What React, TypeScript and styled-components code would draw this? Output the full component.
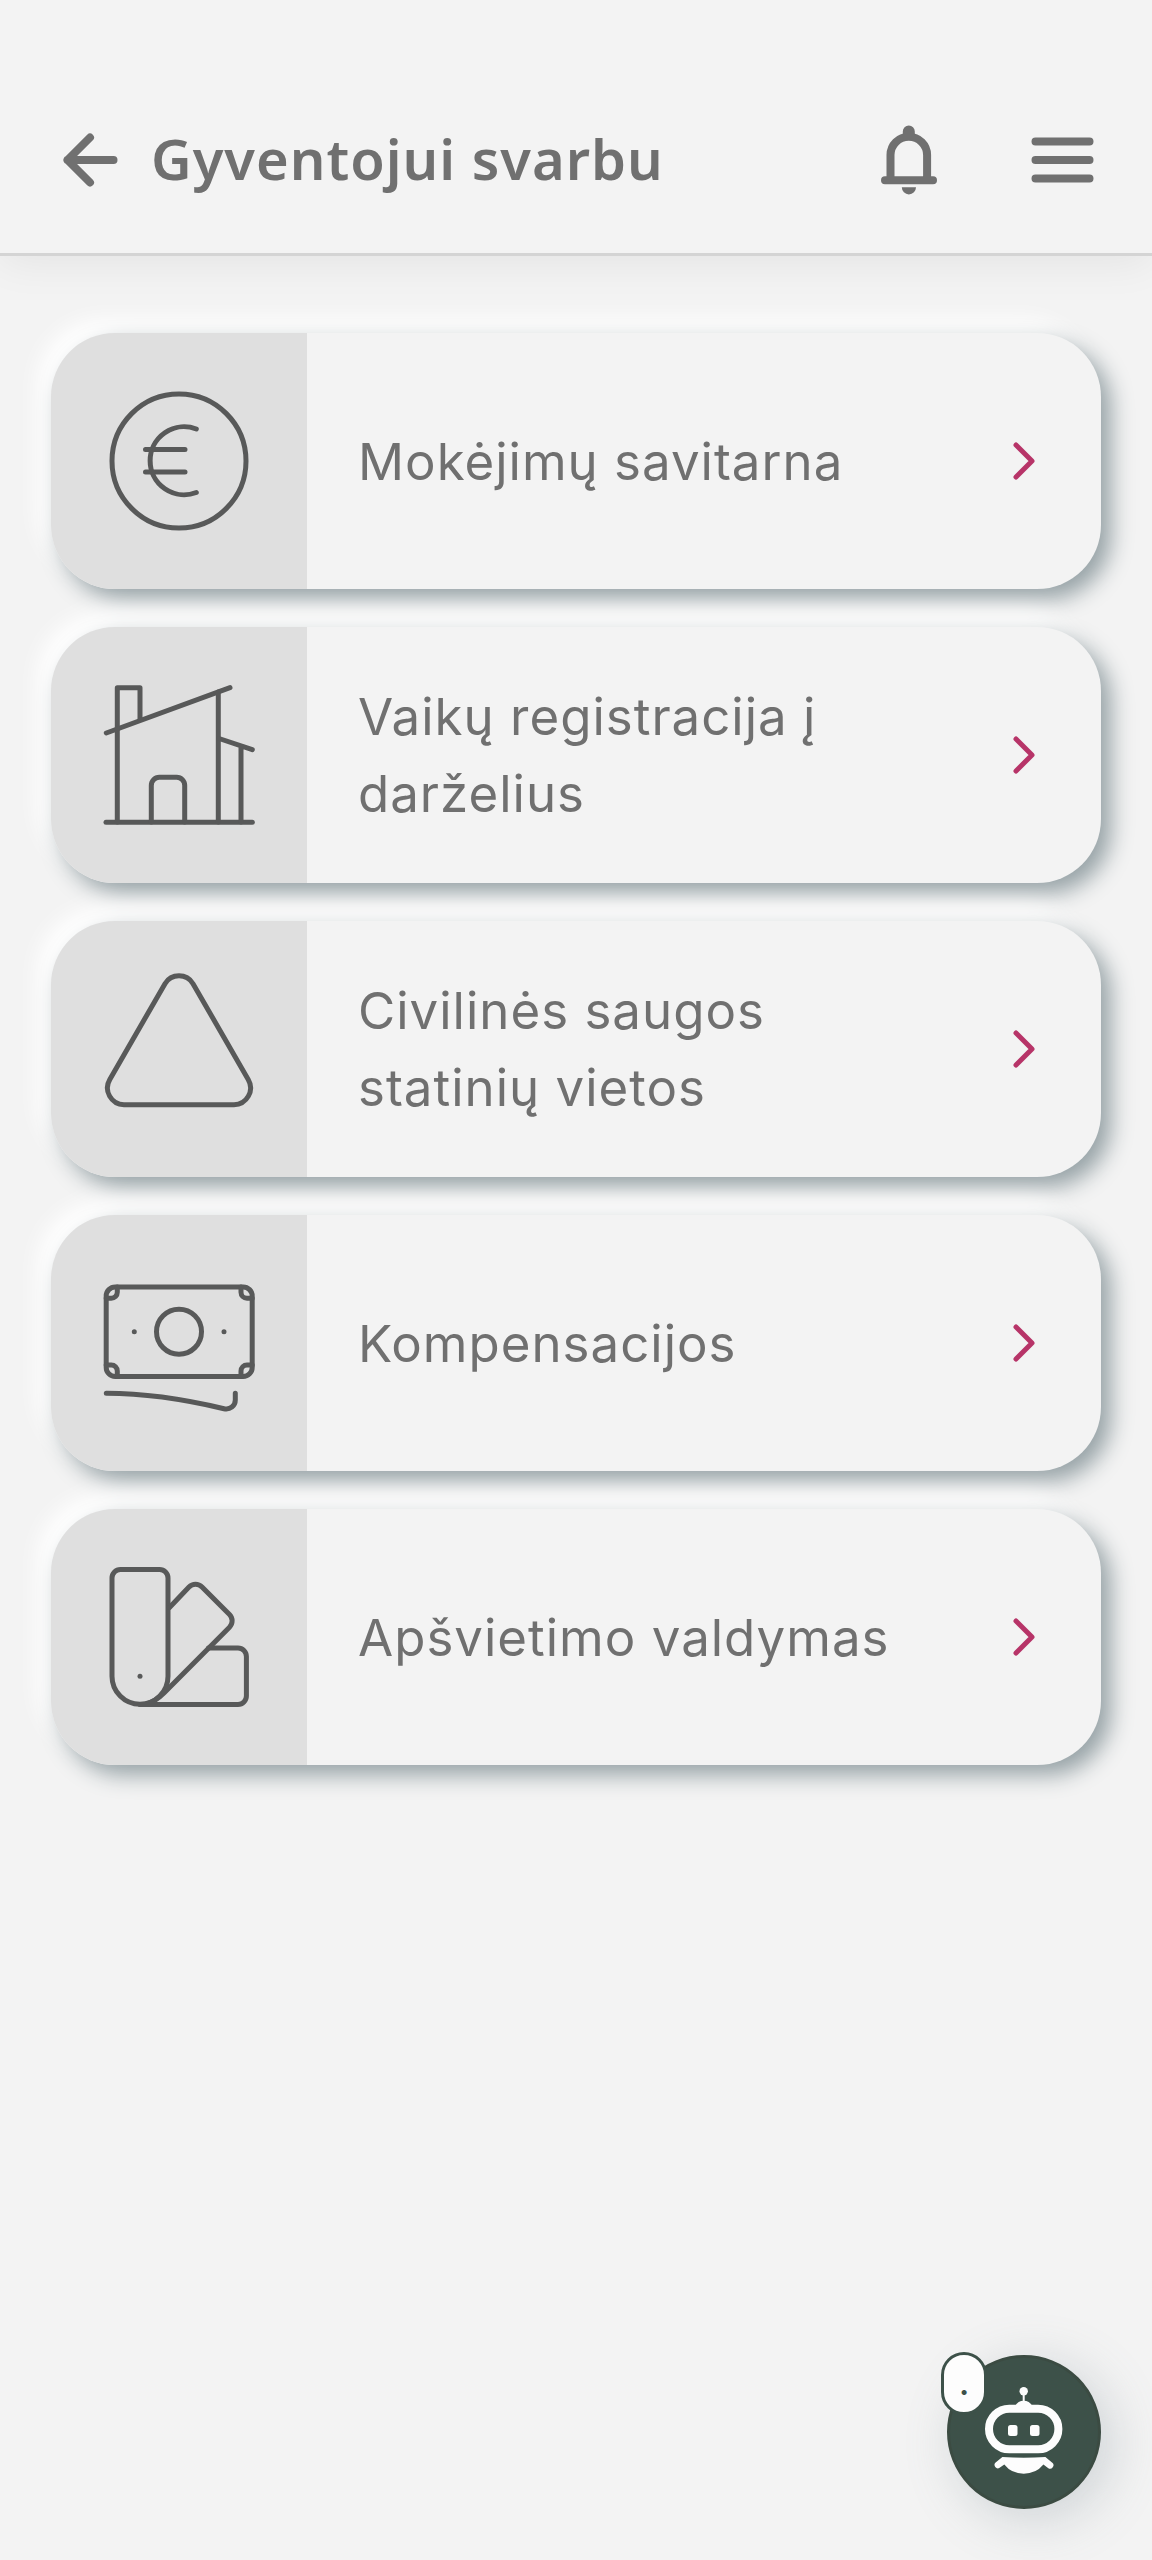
import React from "react";
import styled, { createGlobalStyle } from "styled-components";

const GlobalStyle = createGlobalStyle`
  *, *::before, *::after { box-sizing: border-box; }
  html, body { margin: 0; background: #f3f3f3; }
  body { font-family: Inter, "Noto Sans", sans-serif; color: #707070; }
`;

const Page = styled.div`
  min-height: 100vh;
  background: #f3f3f3;
`;

const Header = styled.header`
  display: flex;
  align-items: center;
  gap: 78px;
  padding: 122px 51px 55px;
  border-bottom: 3px solid #d4d4d4;
  box-shadow: 0 6px 40px rgba(0, 0, 0, 0.065);
`;

const TitleGroup = styled.div`
  display: flex;
  flex: 1;
  align-items: center;
  gap: 24px;
  min-width: 0;
`;

const Title = styled.h1`
  margin: 0;
  font-family: "Noto Sans", "Open Sans", sans-serif;
  font-size: 56px;
  font-weight: 600;
  line-height: 72px;
  padding-bottom: 4px;
  letter-spacing: 1px;
`;

const IconButton = styled.button`
  display: flex;
  flex: none;
  padding: 0;
  border: 0;
  background: none;
  color: #707070;
  cursor: pointer;
`;

const HeaderGlyph = styled.svg`
  width: 76px;
  height: 76px;
  fill: none;
  stroke: currentColor;
  stroke-width: 8;
  stroke-linecap: round;
  stroke-linejoin: round;
`;

const ServiceList = styled.ul`
  display: flex;
  flex-direction: column;
  gap: 38px;
  margin: 0;
  padding: 77px 51px 205px;
  list-style: none;
`;

const ServiceCard = styled.a`
  display: flex;
  min-height: 256px;
  border-radius: 64px;
  background: #f3f3f3;
  color: #707070;
  text-decoration: none;
  box-shadow: 10px 10px 22px #96a2a6, -13px -13px 22px #ffffff;
`;

const IconPanel = styled.span`
  display: flex;
  flex: none;
  align-items: center;
  justify-content: center;
  width: 256px;
  border-radius: 64px 0 0 64px;
  background: #dfdfdf;
  color: #585959;
`;

const ServiceGlyph = styled.svg`
  width: 160px;
  height: 160px;
  fill: none;
  stroke: currentColor;
  stroke-width: 5;
  stroke-linecap: round;
  stroke-linejoin: round;
`;

const CardBody = styled.span`
  display: flex;
  flex: 1;
  align-items: center;
  gap: 51px;
  min-width: 0;
  padding: 26px 51px;
`;

const Label = styled.span`
  flex: 1;
  font-size: 51px;
  line-height: 77px;
  letter-spacing: 1px;
`;

const Chevron = styled.svg`
  flex: none;
  width: 52px;
  height: 52px;
  fill: none;
  stroke: #b73468;
  stroke-width: 5;
  stroke-linecap: round;
  stroke-linejoin: round;
`;

const ChatDock = styled.div`
  position: fixed;
  right: 51px;
  bottom: 51px;
`;

const ChatButton = styled.button`
  display: flex;
  align-items: center;
  justify-content: center;
  width: 154px;
  height: 154px;
  padding: 0;
  border: 3px solid #3b4b42;
  border-radius: 50%;
  background: #3d5149;
  color: #fdfdfd;
  box-shadow: 10px 10px 51px rgba(120, 135, 145, 0.3);
  cursor: pointer;
`;

const ChatBadge = styled.span`
  position: absolute;
  top: -3px;
  left: -6px;
  display: flex;
  align-items: center;
  justify-content: center;
  width: 46px;
  height: 63px;
  border: 3px solid #3d5149;
  border-radius: 23px;
  background: #fdfdfd;
  color: #3d5149;
  font-size: 32px;
  font-weight: 600;
  pointer-events: none;
`;

const RobotGlyph = styled.svg`
  width: 148px;
  height: 148px;
`;

const EuroDrawing = () => (
  <>
    <circle cx="80" cy="80" r="67" />
    <path d="M97.3 48A34 34 0 1 0 97.3 111.5" />
    <path d="M46.5 68.5H86M46.5 91H86" />
  </>
);

const HouseDrawing = () => (
  <>
    <path d="M7 147.3H153.3" />
    <path d="M18.3 147V12.7H41V44.5" />
    <path d="M7.3 58L131 12.7" />
    <path d="M119.3 17V147" />
    <path d="M120 63.5L153.3 74.7M142 71.5V147" />
    <path d="M52.3 147V110.5A8 8 0 0 1 60.3 102.3H77.7A8 8 0 0 1 85.7 110.5V147" />
  </>
);

const TriangleDrawing = () => (
  <path d="M66 14.7L10.8 110.4A16.8 16.8 0 0 0 25 135.7H135A16.8 16.8 0 0 0 149.2 110.4L94 14.7A16.4 16.4 0 0 0 66 14.7Z" />
);

const BanknoteDrawing = () => (
  <>
    <rect x="7.2" y="24" width="146" height="89.4" rx="9" />
    <path d="M18.3 24V29.3A6 6 0 0 1 12.3 35.3H7.2" />
    <path d="M142 24V29.3A6 6 0 0 0 148 35.3H153.2" />
    <path d="M18.3 113.4V108A6 6 0 0 0 12.3 102H7.2" />
    <path d="M142 113.4V108A6 6 0 0 1 148 102H153.2" />
    <circle cx="80" cy="68.7" r="22.5" />
    <path d="M35.3 68.7V68.71M125 68.7V68.71" />
    <path d="M7.3 130.3C48 130.3 84 136 125 145.7C131 147 136.3 143 136.3 137V130.3" />
  </>
);

const SwatchDrawing = () => (
  <>
    <path d="M13 21A8.4 8.4 0 0 1 21.4 12.6H60.6A8.4 8.4 0 0 1 69 21V119.3A28 28 0 0 1 13 119.3Z" />
    <path d="M41 119.3V119.31" />
    <path d="M70.5 50.5L90 30A9 9 0 0 1 103 30L130.5 57.5A9 9 0 0 1 130.5 70.2L65 136Q57 144 47 147.2" />
    <path d="M109.5 91H139A8.4 8.4 0 0 1 147.4 99.4V139A8.4 8.4 0 0 1 139 147.4H41" />
  </>
);

const services = [
  { label: "Mokėjimų savitarna", href: "#mokejimai", Drawing: EuroDrawing },
  { label: "Vaikų registracija į darželius", href: "#darzeliai", Drawing: HouseDrawing },
  { label: "Civilinės saugos statinių vietos", href: "#sauga", Drawing: TriangleDrawing },
  { label: "Kompensacijos", href: "#kompensacijos", Drawing: BanknoteDrawing },
  { label: "Apšvietimo valdymas", href: "#apsvietimas", Drawing: SwatchDrawing },
];

export default function App() {
  return (
    <Page>
      <GlobalStyle />
      <Header>
        <TitleGroup>
          <IconButton type="button" aria-label="Atgal">
            <HeaderGlyph viewBox="0 0 76 76" aria-hidden="true">
              <path d="M39 15.5L16.5 38L39 60.5M16.5 38H62.5" />
            </HeaderGlyph>
          </IconButton>
          <Title>Gyventojui svarbu</Title>
        </TitleGroup>
        <IconButton type="button" aria-label="Pranešimai">
          <HeaderGlyph viewBox="0 0 76 76" aria-hidden="true">
            <path d="M19.5 58V33A18.3 18.3 0 0 1 56.1 33V58M14 58.3H62" />
            <path
              d="M31.8 14V9.6A6 6 0 0 1 43.8 9.6V14ZM30.8 65.3H45A7.1 7.1 0 0 1 30.8 65.3Z"
              fill="currentColor"
              stroke="none"
            />
          </HeaderGlyph>
        </IconButton>
        <IconButton type="button" aria-label="Meniu">
          <HeaderGlyph viewBox="0 0 76 76" aria-hidden="true">
            <path d="M10.5 19.5H64.5M10.5 38H64.5M10.5 56.5H64.5" />
          </HeaderGlyph>
        </IconButton>
      </Header>
      <main>
        <ServiceList>
          {services.map(({ label, href, Drawing }) => (
            <li key={href}>
              <ServiceCard href={href}>
                <IconPanel>
                  <ServiceGlyph viewBox="0 0 160 160" aria-hidden="true">
                    <Drawing />
                  </ServiceGlyph>
                </IconPanel>
                <CardBody>
                  <Label>{label}</Label>
                  <Chevron viewBox="0 0 52 52" aria-hidden="true">
                    <path d="M18 10L34 26L18 42" />
                  </Chevron>
                </CardBody>
              </ServiceCard>
            </li>
          ))}
        </ServiceList>
      </main>
      <ChatDock>
        <ChatButton type="button" aria-label="Pokalbių robotas">
          <RobotGlyph viewBox="3 3 148 148" aria-hidden="true">
            <rect x="42" y="53.7" width="69.4" height="40.6" rx="20.3" fill="none" stroke="currentColor" strokeWidth="8" />
            <rect x="61" y="70" width="9.5" height="11" rx="2.5" fill="currentColor" />
            <rect x="83" y="70" width="9.5" height="11" rx="2.5" fill="currentColor" />
            <circle cx="76.7" cy="36.3" r="4.2" fill="currentColor" />
            <path d="M76.7 38V48" stroke="currentColor" strokeWidth="2" />
            <path d="M68 51C70 47.5 73 45.7 76.7 45.7C80.4 45.7 83.4 47.5 85.4 51Z" fill="currentColor" />
            <path
              d="M55.4 102Q76.7 103.4 98.4 102L105 107.5A3.3 3.3 0 0 1 101 113L96.4 109.6Q89 118.8 76.7 118.8Q64.5 118.8 57.3 109.6L52.6 112.8A3.3 3.3 0 0 1 48.6 107.6Z"
              fill="currentColor"
            />
          </RobotGlyph>
        </ChatButton>
        <ChatBadge>.</ChatBadge>
      </ChatDock>
    </Page>
  );
}
